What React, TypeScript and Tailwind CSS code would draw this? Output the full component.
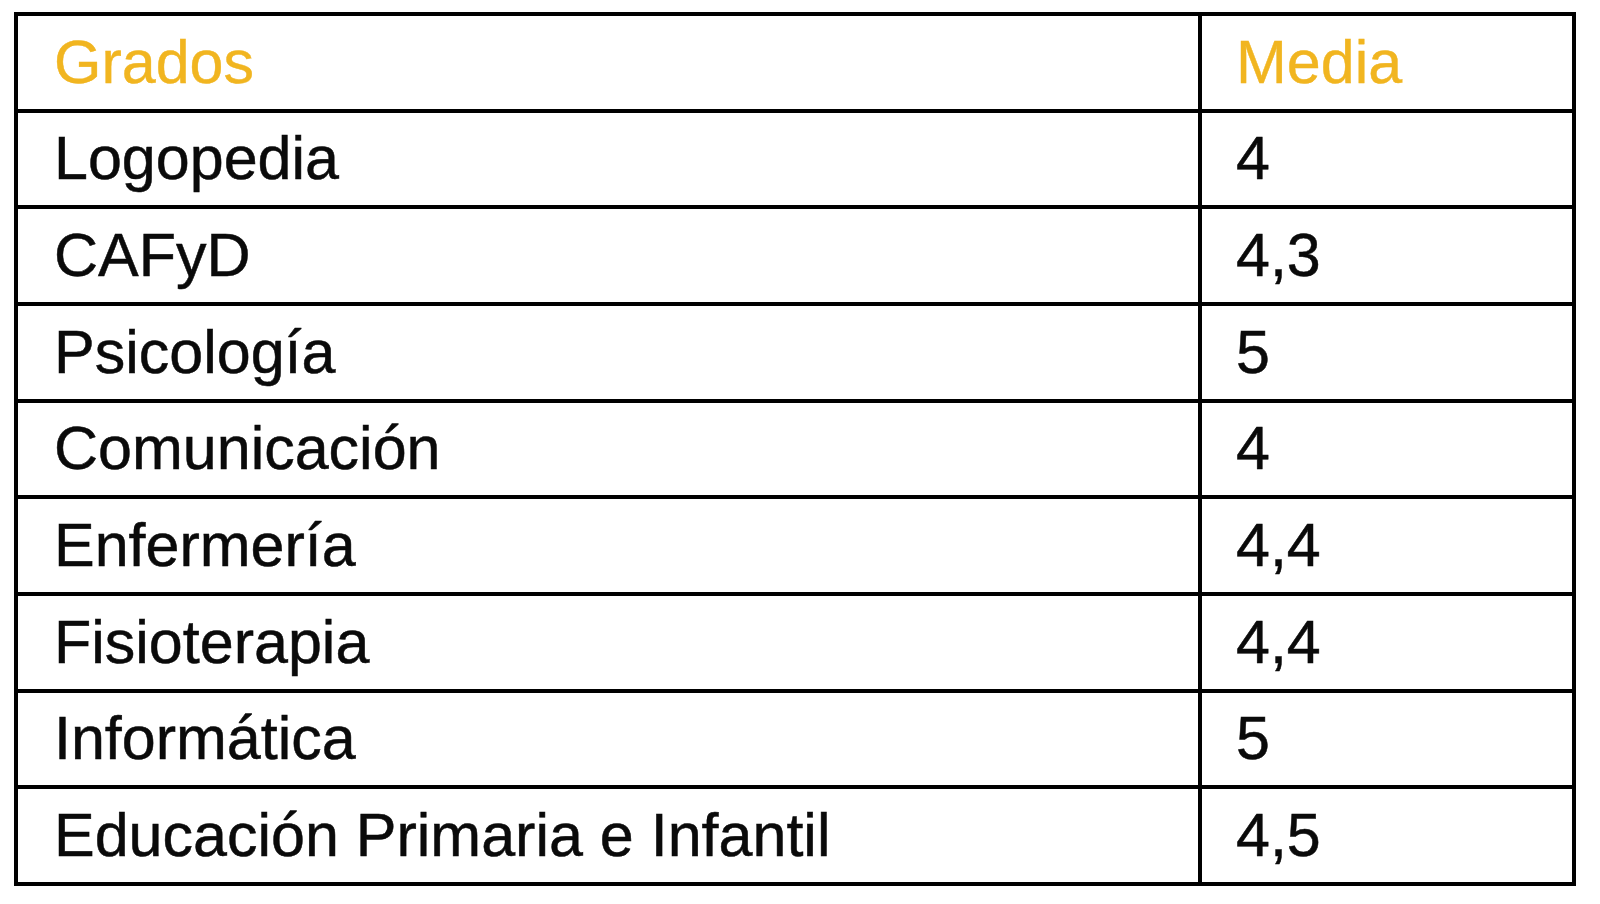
import React from "react";

const rows: [string, string][] = [
  ["Logopedia", "4"],
  ["CAFyD", "4,3"],
  ["Psicología", "5"],
  ["Comunicación", "4"],
  ["Enfermería", "4,4"],
  ["Fisioterapia", "4,4"],
  ["Informática", "5"],
  ["Educación Primaria e Infantil", "4,5"],
];

export default function App() {
  return (
    <div className="w-[1600px] h-[904px] bg-white pt-[12px] pl-[14px] font-['Liberation_Sans',Arial,sans-serif]">
      <div className="w-[1562px] h-[874px] bg-black p-[4px] grid grid-cols-[1180px_1fr] grid-rows-[repeat(9,1fr)] gap-[4px]">
        <div className="bg-white flex items-center pl-[36px] text-[61px] leading-normal text-[#f1b520] [-webkit-text-stroke:0.4px_#f1b520]">
          Grados
        </div>
        <div className="bg-white flex items-center pl-[34px] text-[61px] leading-normal text-[#f1b520] [-webkit-text-stroke:0.4px_#f1b520]">
          Media
        </div>
        {rows.map(([g, m]) => (
          <React.Fragment key={g}>
            <div className="bg-white flex items-center pl-[36px] text-[61px] leading-normal text-[#0a0a0a] [-webkit-text-stroke:0.5px_#0a0a0a]">
              {g}
            </div>
            <div className="bg-white flex items-center pl-[34px] text-[61px] leading-normal text-[#0a0a0a] [-webkit-text-stroke:0.5px_#0a0a0a]">
              {m}
            </div>
          </React.Fragment>
        ))}
      </div>
    </div>
  );
}
